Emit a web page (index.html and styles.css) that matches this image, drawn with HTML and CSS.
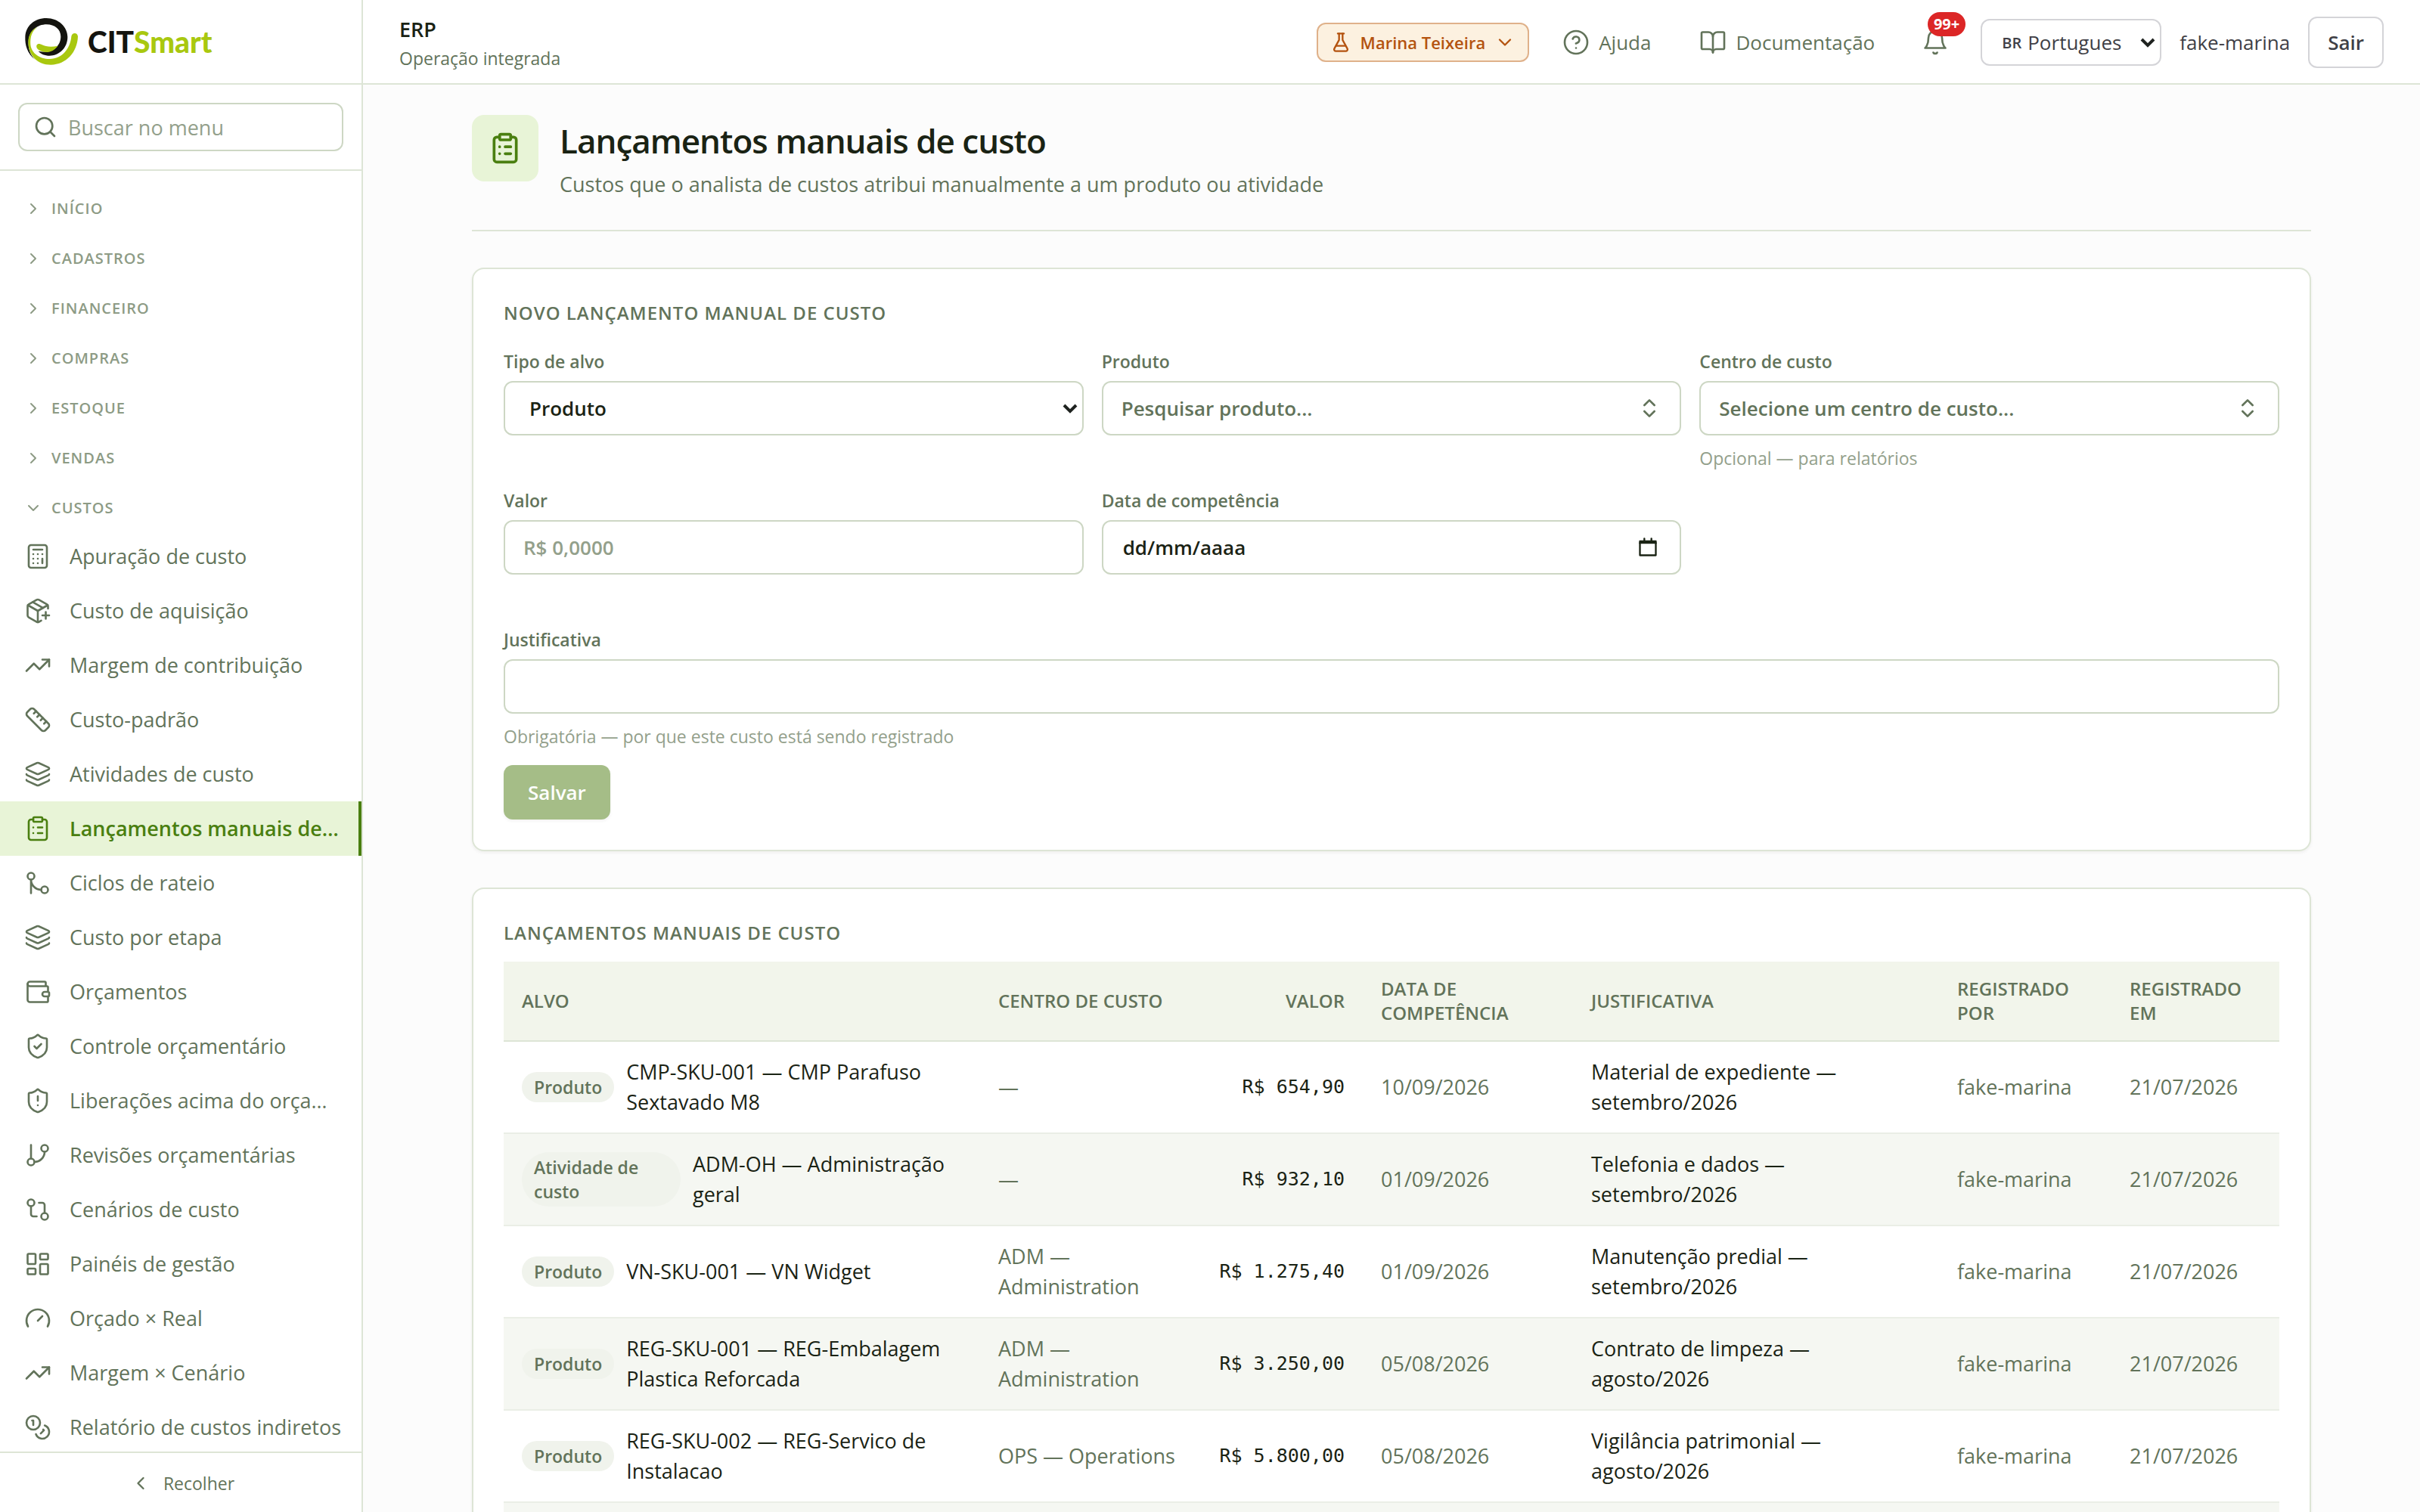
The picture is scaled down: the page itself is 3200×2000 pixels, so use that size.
FILE: index.html
```html
<!DOCTYPE html>
<html lang="pt-BR">
<head>
<meta charset="utf-8">
<meta name="viewport" content="width=device-width, initial-scale=1">
<title>Lançamentos manuais de custo — ERP</title>
<link rel="stylesheet" href="styles.css">
</head>
<body>
<svg class="sprite" aria-hidden="true">
  <symbol id="i-search" viewBox="0 0 24 24"><circle cx="11" cy="11" r="8"/><path d="m21 21-4.3-4.3"/></symbol>
  <symbol id="i-right" viewBox="0 0 24 24"><path d="m9 18 6-6-6-6"/></symbol>
  <symbol id="i-left" viewBox="0 0 24 24"><path d="m15 18-6-6 6-6"/></symbol>
  <symbol id="i-down" viewBox="0 0 24 24"><path d="m6 9 6 6 6-6"/></symbol>
  <symbol id="i-updown" viewBox="0 0 24 24"><path d="m7 15 5 5 5-5"/><path d="m7 9 5-5 5 5"/></symbol>
  <symbol id="i-calculator" viewBox="0 0 24 24"><rect width="16" height="20" x="4" y="2" rx="2"/><path d="M8 6h8M16 14v4M16 10h.01M12 10h.01M8 10h.01M12 14h.01M8 14h.01M12 18h.01M8 18h.01"/></symbol>
  <symbol id="i-package" viewBox="0 0 24 24"><path d="M16 16h6M19 13v6"/><path d="M21 10V8a2 2 0 0 0-1-1.73l-7-4a2 2 0 0 0-2 0l-7 4A2 2 0 0 0 3 8v8a2 2 0 0 0 1 1.73l7 4a2 2 0 0 0 2 0l2-1.14"/><path d="m7.5 4.27 9 5.15"/><path d="M3.29 7 12 12l8.71-5"/><path d="M12 22V12"/></symbol>
  <symbol id="i-trend" viewBox="0 0 24 24"><path d="M22 7 13.5 15.5 8.5 10.5 2 17"/><path d="M16 7h6v6"/></symbol>
  <symbol id="i-ruler" viewBox="0 0 24 24"><path d="M21.3 15.3a2.4 2.4 0 0 1 0 3.4l-2.6 2.6a2.4 2.4 0 0 1-3.4 0L2.7 8.7a2.41 2.41 0 0 1 0-3.4l2.6-2.6a2.41 2.41 0 0 1 3.4 0Z"/><path d="m14.5 12.5 2-2M11.5 9.5l2-2M8.500 6.500l2-2M17.500 15.500l2-2"/></symbol>
  <symbol id="i-layers" viewBox="0 0 24 24"><path d="M12.830 2.180a2 2 0 0 0-1.660 0L2.600 6.080a1 1 0 0 0 0 1.830l8.580 3.910a2 2 0 0 0 1.660 0l8.580-3.900a1 1 0 0 0 0-1.830z"/><path d="M2 12a1 1 0 0 0 .58.910l8.600 3.910a2 2 0 0 0 1.650 0l8.580-3.900A1 1 0 0 0 22 12"/><path d="M2 17a1 1 0 0 0 .58.910l8.600 3.910a2 2 0 0 0 1.650 0l8.580-3.900A1 1 0 0 0 22 17"/></symbol>
  <symbol id="i-clipboard" viewBox="0 0 24 24"><rect width="8" height="4" x="8" y="2" rx="1"/><path d="M16 4h2a2 2 0 0 1 2 2v14a2 2 0 0 1-2 2H6a2 2 0 0 1-2-2V6a2 2 0 0 1 2-2h2"/><path d="M12 11h4M12 16h4M8 11h.01M8 16h.01"/></symbol>
  <symbol id="i-merge" viewBox="0 0 24 24"><circle cx="18" cy="18" r="3"/><circle cx="6" cy="6" r="3"/><path d="M6 21V9a9 9 0 0 0 9 9"/></symbol>
  <symbol id="i-wallet" viewBox="0 0 24 24"><path d="M19 7V4a1 1 0 0 0-1-1H5a2 2 0 0 0 0 4h15a1 1 0 0 1 1 1v4h-3a2 2 0 0 0 0 4h3a1 1 0 0 0 1-1v-2a1 1 0 0 0-1-1"/><path d="M3 5v14a2 2 0 0 0 2 2h15a1 1 0 0 0 1-1v-4"/></symbol>
  <symbol id="i-shield-check" viewBox="0 0 24 24"><path d="M20 13c0 5-3.500 7.500-7.660 8.950a1 1 0 0 1-.67-.01C7.500 20.500 4 18 4 13V6a1 1 0 0 1 1-1c2 0 4.500-1.200 6.240-2.720a1.170 1.170 0 0 1 1.520 0C14.510 3.810 17 5 19 5a1 1 0 0 1 1 1z"/><path d="m9 12 2 2 4-4"/></symbol>
  <symbol id="i-shield-alert" viewBox="0 0 24 24"><path d="M20 13c0 5-3.500 7.500-7.660 8.950a1 1 0 0 1-.67-.01C7.500 20.500 4 18 4 13V6a1 1 0 0 1 1-1c2 0 4.500-1.200 6.240-2.720a1.170 1.170 0 0 1 1.520 0C14.510 3.810 17 5 19 5a1 1 0 0 1 1 1z"/><path d="M12 8v4M12 16h.01"/></symbol>
  <symbol id="i-branch" viewBox="0 0 24 24"><path d="M6 3v12"/><circle cx="18" cy="6" r="3"/><circle cx="6" cy="18" r="3"/><path d="M18 9a9 9 0 0 1-9 9"/></symbol>
  <symbol id="i-compare" viewBox="0 0 24 24"><circle cx="18" cy="18" r="3"/><circle cx="6" cy="6" r="3"/><path d="M13 6h3a2 2 0 0 1 2 2v7"/><path d="M11 18H8a2 2 0 0 1-2-2V9"/></symbol>
  <symbol id="i-dashboard" viewBox="0 0 24 24"><rect width="7" height="9" x="3" y="3" rx="1"/><rect width="7" height="5" x="14" y="3" rx="1"/><rect width="7" height="9" x="14" y="12" rx="1"/><rect width="7" height="5" x="3" y="16" rx="1"/></symbol>
  <symbol id="i-gauge" viewBox="0 0 24 24"><path d="m12 14 4-4"/><path d="M3.340 19a10 10 0 1 1 17.320 0"/></symbol>
  <symbol id="i-coins" viewBox="0 0 24 24"><circle cx="8" cy="8" r="6"/><path d="M18.090 10.370A6 6 0 1 1 10.340 18"/><path d="M7 6h1v4"/><path d="m16.710 13.880.7.710-2.820 2.820"/></symbol>
  <symbol id="i-flask" viewBox="0 0 24 24"><path d="M10 2v7.310L4.700 19a2 2 0 0 0 1.800 3h11a2 2 0 0 0 1.800-3L14 9.300V2"/><path d="M8.500 2h7M7 16h10"/></symbol>
  <symbol id="i-help" viewBox="0 0 24 24"><circle cx="12" cy="12" r="10"/><path d="M9.090 9a3 3 0 0 1 5.830 1c0 2-3 3-3 3M12 17h.01"/></symbol>
  <symbol id="i-book" viewBox="0 0 24 24"><path d="M12 7v14"/><path d="M3 18a1 1 0 0 1-1-1V4a1 1 0 0 1 1-1h5a4 4 0 0 1 4 4 4 4 0 0 1 4-4h5a1 1 0 0 1 1 1v13a1 1 0 0 1-1 1h-6a3 3 0 0 0-3 3 3 3 0 0 0-3-3z"/></symbol>
  <symbol id="i-bell" viewBox="0 0 24 24"><path d="M6 8a6 6 0 0 1 12 0c0 7 3 9 3 9H3s3-2 3-9"/><path d="M10.300 21a1.940 1.940 0 0 0 3.400 0"/></symbol>
  <symbol id="i-calendar" viewBox="0 0 24 24"><path d="M3 5h18v16H3zM8 2v3M16 2v3"/><path d="M3 7h18"/></symbol>
</svg>

<div class="app">
  <aside class="sidebar">
    <a class="brand" href="#" aria-label="CITSmart">
      <svg class="brand-mark" viewBox="40 42 214 192" aria-hidden="true">
        <path fill="#14140f" d="M83 210C50 185 42 150 43 120 45 75 80 45 127 45c48 0 84 35 84 75 0 45-36 74-71 74-20 0-35-7-45-18 30 5 50 3 66-10 16-13 23-30 23-48 0-28-24-48-56-48-38 0-70 25-72 70-1 25 6 50 27 70Z"/>
        <path fill="#a9c80f" d="M92 80C68 96 62 122 64 150c4 35 36 57 76 57 50 0 82-42 86-89 2-17 25-17 26 0-2 62-47 112-107 112-55 0-90-40-90-90 0-28 13-50 37-60Z"/>
        <path fill="#a9c80f" d="M88 153c4-9 14-7 22-2 15 8 40 9 62 4-12 16-27 25-44 25-20 0-44-11-40-27Z"/>
      </svg>
      <span class="brand-name">CIT<span class="brand-accent">Smart</span></span>
    </a>
    <div class="search-area">
      <label class="search">
        <svg class="icon icon-md"><use href="#i-search"/></svg>
        <input type="text" placeholder="Buscar no menu" aria-label="Buscar no menu">
      </label>
    </div>
    <nav class="nav" aria-label="Menu principal">
      <button class="group" type="button"><svg class="icon icon-xs"><use href="#i-right"/></svg>Início</button>
      <button class="group" type="button"><svg class="icon icon-xs"><use href="#i-right"/></svg>Cadastros</button>
      <button class="group" type="button"><svg class="icon icon-xs"><use href="#i-right"/></svg>Financeiro</button>
      <button class="group" type="button"><svg class="icon icon-xs"><use href="#i-right"/></svg>Compras</button>
      <button class="group" type="button"><svg class="icon icon-xs"><use href="#i-right"/></svg>Estoque</button>
      <button class="group" type="button"><svg class="icon icon-xs"><use href="#i-right"/></svg>Vendas</button>
      <button class="group" type="button" aria-expanded="true"><svg class="icon icon-xs"><use href="#i-down"/></svg>Custos</button>
      <a class="item" href="#"><svg class="icon"><use href="#i-calculator"/></svg><span>Apuração de custo</span></a>
      <a class="item" href="#"><svg class="icon"><use href="#i-package"/></svg><span>Custo de aquisição</span></a>
      <a class="item" href="#"><svg class="icon"><use href="#i-trend"/></svg><span>Margem de contribuição</span></a>
      <a class="item" href="#"><svg class="icon"><use href="#i-ruler"/></svg><span>Custo-padrão</span></a>
      <a class="item" href="#"><svg class="icon"><use href="#i-layers"/></svg><span>Atividades de custo</span></a>
      <a class="item active" href="#" aria-current="page"><svg class="icon"><use href="#i-clipboard"/></svg><span>Lançamentos manuais de custo</span></a>
      <a class="item" href="#"><svg class="icon"><use href="#i-merge"/></svg><span>Ciclos de rateio</span></a>
      <a class="item" href="#"><svg class="icon"><use href="#i-layers"/></svg><span>Custo por etapa</span></a>
      <a class="item" href="#"><svg class="icon"><use href="#i-wallet"/></svg><span>Orçamentos</span></a>
      <a class="item" href="#"><svg class="icon"><use href="#i-shield-check"/></svg><span>Controle orçamentário</span></a>
      <a class="item" href="#"><svg class="icon"><use href="#i-shield-alert"/></svg><span>Liberações acima do orçamento</span></a>
      <a class="item" href="#"><svg class="icon"><use href="#i-branch"/></svg><span>Revisões orçamentárias</span></a>
      <a class="item" href="#"><svg class="icon"><use href="#i-compare"/></svg><span>Cenários de custo</span></a>
      <a class="item" href="#"><svg class="icon"><use href="#i-dashboard"/></svg><span>Painéis de gestão</span></a>
      <a class="item" href="#"><svg class="icon"><use href="#i-gauge"/></svg><span>Orçado × Real</span></a>
      <a class="item" href="#"><svg class="icon"><use href="#i-trend"/></svg><span>Margem × Cenário</span></a>
      <a class="item" href="#"><svg class="icon"><use href="#i-coins"/></svg><span>Relatório de custos indiretos</span></a>
    </nav>
    <button class="collapse" type="button"><svg class="icon icon-sm"><use href="#i-left"/></svg>Recolher</button>
  </aside>

  <div class="workspace">
    <header class="topbar">
      <div class="app-title">
        <strong>ERP</strong>
        <span>Operação integrada</span>
      </div>
      <div class="tools">
        <button class="persona" type="button"><svg class="icon icon-sm"><use href="#i-flask"/></svg>Marina Teixeira<svg class="icon icon-sm"><use href="#i-down"/></svg></button>
        <a class="tool-link" href="#"><svg class="icon"><use href="#i-help"/></svg>Ajuda</a>
        <a class="tool-link" href="#"><svg class="icon"><use href="#i-book"/></svg>Documentação</a>
        <button class="bell" type="button" aria-label="Notificações"><svg class="icon"><use href="#i-bell"/></svg><span class="count">99+</span></button>
        <label class="language"><span>BR</span>
          <select aria-label="Idioma"><option>Portugues</option></select>
        </label>
        <span class="user">fake-marina</span>
        <button class="logout" type="button">Sair</button>
      </div>
    </header>

    <main class="main">
      <div class="content">
        <div class="page-head">
          <div class="page-icon"><svg class="icon icon-lg"><use href="#i-clipboard"/></svg></div>
          <div>
            <h1>Lançamentos manuais de custo</h1>
            <p>Custos que o analista de custos atribui manualmente a um produto ou atividade</p>
          </div>
        </div>

        <section class="card">
          <h2>Novo lançamento manual de custo</h2>
          <form class="form">
            <div class="field">
              <label for="tipo">Tipo de alvo</label>
              <select class="control dropdown" id="tipo"><option>Produto</option></select>
            </div>
            <div class="field">
              <label for="produto">Produto</label>
              <button class="control combo" id="produto" type="button">Pesquisar produto...<svg class="icon icon-md"><use href="#i-updown"/></svg></button>
            </div>
            <div class="field">
              <label for="centro">Centro de custo</label>
              <button class="control combo" id="centro" type="button">Selecione um centro de custo...<svg class="icon icon-md"><use href="#i-updown"/></svg></button>
              <p class="hint">Opcional — para relatórios</p>
            </div>
            <div class="field">
              <label for="valor">Valor</label>
              <input class="control" id="valor" type="text" placeholder="R$ 0,0000">
            </div>
            <div class="field">
              <label for="data">Data de competência</label>
              <div class="control date">
                <input id="data" type="text" placeholder="dd/mm/aaaa">
                <button type="button" aria-label="Abrir calendário"><svg class="icon icon-sm"><use href="#i-calendar"/></svg></button>
              </div>
            </div>
            <div class="field wide">
              <label for="justificativa">Justificativa</label>
              <input class="control" id="justificativa" type="text">
              <p class="hint">Obrigatória — por que este custo está sendo registrado</p>
            </div>
            <button class="save" type="submit" disabled>Salvar</button>
          </form>
        </section>

        <section class="card">
          <h2>Lançamentos manuais de custo</h2>
          <table class="entries">
            <colgroup>
              <col class="c-target"><col class="c-center"><col class="c-value"><col class="c-date"><col class="c-reason"><col class="c-by"><col class="c-on">
            </colgroup>
            <thead>
              <tr><th>Alvo</th><th>Centro de custo</th><th class="num">Valor</th><th>Data de competência</th><th>Justificativa</th><th>Registrado por</th><th>Registrado em</th></tr>
            </thead>
            <tbody>
              <tr>
                <td><div class="target"><span class="tag">Produto</span><span>CMP-SKU-001 — CMP Parafuso Sextavado M8</span></div></td>
                <td class="muted">—</td><td class="num">R$&nbsp;654,90</td><td class="muted">10/09/2026</td>
                <td>Material de expediente — setembro/2026</td><td class="muted">fake-marina</td><td class="muted">21/07/2026</td>
              </tr>
              <tr>
                <td><div class="target"><span class="tag">Atividade de custo</span><span>ADM-OH — Administração geral</span></div></td>
                <td class="muted">—</td><td class="num">R$&nbsp;932,10</td><td class="muted">01/09/2026</td>
                <td>Telefonia e dados — setembro/2026</td><td class="muted">fake-marina</td><td class="muted">21/07/2026</td>
              </tr>
              <tr>
                <td><div class="target"><span class="tag">Produto</span><span>VN-SKU-001 — VN Widget</span></div></td>
                <td class="muted">ADM — Administration</td><td class="num">R$&nbsp;1.275,40</td><td class="muted">01/09/2026</td>
                <td>Manutenção predial — setembro/2026</td><td class="muted">fake-marina</td><td class="muted">21/07/2026</td>
              </tr>
              <tr>
                <td><div class="target"><span class="tag">Produto</span><span>REG-SKU-001 — REG-Embalagem Plastica Reforcada</span></div></td>
                <td class="muted">ADM — Administration</td><td class="num">R$&nbsp;3.250,00</td><td class="muted">05/08/2026</td>
                <td>Contrato de limpeza — agosto/2026</td><td class="muted">fake-marina</td><td class="muted">21/07/2026</td>
              </tr>
              <tr>
                <td><div class="target"><span class="tag">Produto</span><span>REG-SKU-002 — REG-Servico de Instalacao</span></div></td>
                <td class="muted">OPS — Operations</td><td class="num">R$&nbsp;5.800,00</td><td class="muted">05/08/2026</td>
                <td>Vigilância patrimonial — agosto/2026</td><td class="muted">fake-marina</td><td class="muted">21/07/2026</td>
              </tr>
              <tr><td></td><td></td><td></td><td></td><td></td><td></td><td></td></tr>
            </tbody>
          </table>
        </section>
      </div>
    </main>
  </div>
</div>
</body>
</html>
```
FILE: styles.css
```css
:root {
  --ink: #1a2314;
  --muted: #62735a;
  --faint: #93a08b;
  --line: #dde5d6;
  --field-line: #cdd7c4;
  --green: #4a7f10;
  --green-soft: #e8f4d7;
  --zinc: #3f3f46;
  --zinc-line: #d4d4d8;
}

* { box-sizing: border-box; }

body {
  margin: 0;
  background: #fcfcfc;
  color: var(--ink);
  font-family: "Open Sans", "Noto Sans", sans-serif;
  font-size: 27px;
  line-height: 40px;
}

button, input, select {
  margin: 0;
  padding: 0;
  border: 0;
  background: none;
  color: inherit;
  font: inherit;
}

h1, h2, p { margin: 0; }
a { color: inherit; text-decoration: none; }
.sprite { display: none; }

.icon {
  width: 36px;
  height: 36px;
  flex: none;
  fill: none;
  stroke: currentColor;
  stroke-width: 1.75;
  stroke-linecap: round;
  stroke-linejoin: round;
}
.icon-xs { width: 24px; height: 24px; stroke-width: 2; }
.icon-sm { width: 28px; height: 28px; stroke-width: 2; }
.icon-md { width: 32px; height: 32px; stroke-width: 2; }
.icon-lg { width: 44px; height: 44px; stroke-width: 2; }

.app { display: flex; height: 100vh; overflow: hidden; }

/* Sidebar */
.sidebar {
  display: flex;
  flex: none;
  flex-direction: column;
  width: 480px;
  border-right: 2px solid var(--line);
  background: #fff;
  color: var(--muted);
}
.brand {
  display: flex;
  flex: none;
  align-items: center;
  gap: 12px;
  height: 112px;
  padding: 0 32px;
  border-bottom: 2px solid var(--line);
}
.brand-mark { width: 72px; height: 64px; }
.brand-name {
  color: #14140f;
  font-family: Lato, sans-serif;
  font-size: 39px;
  font-weight: 900;
}
.brand-accent { color: #a9c80f; }

.search-area { padding: 24px; border-bottom: 2px solid var(--line); }
.search {
  display: flex;
  align-items: center;
  gap: 14px;
  height: 64px;
  padding: 0 18px;
  border: 2px solid var(--field-line);
  border-radius: 12px;
}
.search input { flex: 1; min-width: 0; padding-top: 2px; outline: 0; }
input::placeholder { color: var(--faint); opacity: 1; }

.nav {
  flex: 1;
  min-height: 0;
  padding-top: 12px;
  overflow-y: auto;
  scrollbar-width: none;
}
.group {
  display: flex;
  align-items: center;
  gap: 12px;
  width: 100%;
  height: 56px;
  margin-top: 10px;
  padding: 0 32px;
  color: #8d9b85;
  font-size: 20px;
  font-weight: 600;
  letter-spacing: 1px;
  text-transform: uppercase;
}
.item {
  display: flex;
  align-items: center;
  gap: 24px;
  height: 72px;
  padding: 0 24px 0 32px;
}
.item span {
  overflow: hidden;
  text-overflow: ellipsis;
  white-space: nowrap;
}
.item.active {
  border-right: 4px solid var(--green);
  background: var(--green-soft);
  color: var(--green);
  font-weight: 600;
}
.collapse {
  display: flex;
  flex: none;
  align-items: center;
  justify-content: center;
  gap: 16px;
  height: 80px;
  padding: 2px 0 0 4px;
  border-top: 2px solid var(--line);
  font-size: 23px;
}

/* Top bar */
.workspace { display: flex; flex: 1; flex-direction: column; min-width: 0; }
.topbar {
  display: flex;
  flex: none;
  align-items: center;
  justify-content: space-between;
  height: 112px;
  padding: 2px 48px 0;
  border-bottom: 2px solid var(--line);
  background: #fff;
}
.app-title { display: flex; flex-direction: column; padding-top: 2px; }
.app-title strong { font-weight: 600; }
.app-title span { color: var(--muted); font-size: 23px; line-height: 36px; }
.tools {
  display: flex;
  align-items: center;
  gap: 24px;
  color: var(--zinc);
  font-size: 26px;
}
.persona {
  display: flex;
  align-items: center;
  gap: 12px;
  height: 52px;
  padding: 0 16px;
  border: 2px solid #dfb18a;
  border-radius: 12px;
  background: #fcf1e0;
  color: #b4530f;
  font-size: 22px;
  font-weight: 600;
}
.tool-link {
  display: flex;
  align-items: center;
  gap: 12px;
  padding: 0 20px;
  color: var(--muted);
}
.bell {
  position: relative;
  display: grid;
  place-items: center;
  width: 72px;
  height: 72px;
  color: var(--muted);
}
.count {
  position: absolute;
  top: -4px;
  right: -4px;
  height: 32px;
  padding: 0 8px;
  border-radius: 16px;
  background: #dc2626;
  color: #fff;
  font-size: 20px;
  font-weight: 700;
  line-height: 32px;
}
.language {
  display: flex;
  align-items: center;
  gap: 8px;
  height: 62px;
  padding: 0 6px 0 26px;
  border: 2px solid var(--zinc-line);
  border-radius: 12px;
  background: #fff;
}
.language span { padding-top: 2px; font-size: 20px; font-weight: 600; }
.language select, .dropdown {
  appearance: none;
  background-repeat: no-repeat;
  background-image: url("data:image/svg+xml,%3Csvg xmlns='http://www.w3.org/2000/svg' viewBox='0 0 20 14'%3E%3Cpath d='M2 3l8 8 8-8' fill='none' stroke='%231f2320' stroke-width='4'/%3E%3C/svg%3E");
  background-size: 20px 14px;
}
.language select { padding-right: 44px; background-position: right center; }
.logout {
  height: 68px;
  padding: 0 24px;
  border: 2px solid var(--zinc-line);
  border-radius: 12px;
  background: #fff;
  font-weight: 600;
}

/* Page */
.main { flex: 1; min-height: 0; overflow-y: auto; scrollbar-width: none; }
.content {
  display: flex;
  flex-direction: column;
  gap: 48px;
  max-width: 2528px;
  margin: 0 auto;
  padding: 40px 48px 48px;
}
.page-head {
  display: flex;
  gap: 28px;
  padding-bottom: 40px;
  border-bottom: 2px solid var(--line);
}
.page-icon {
  display: grid;
  flex: none;
  place-items: center;
  width: 88px;
  height: 88px;
  border-radius: 16px;
  background: var(--green-soft);
  color: var(--green);
}
h1 { font-size: 44px; font-weight: 600; line-height: 68px; letter-spacing: -1px; }
.page-head p { margin-top: 4px; color: var(--muted); }

.card {
  padding: 40px;
  border: 2px solid var(--line);
  border-radius: 16px;
  background: #fff;
  box-shadow: 0 2px 4px rgba(26, 35, 20, 0.06);
}
h2 {
  color: var(--muted);
  font-size: 24px;
  font-weight: 600;
  line-height: 36px;
  letter-spacing: 1px;
  text-transform: uppercase;
}

/* Form */
.form {
  display: grid;
  grid-template-columns: repeat(3, 1fr);
  gap: 20px 24px;
  margin-top: 28px;
}
.field { display: flex; flex-direction: column; gap: 8px; min-height: 164px; }
.field label { color: var(--muted); font-size: 23px; font-weight: 600; line-height: 36px; }
.wide { grid-column: 1 / -1; }
.control {
  width: 100%;
  height: 72px;
  padding: 0 24px;
  border: 2px solid var(--field-line);
  border-radius: 12px;
  background-color: #fff;
  font-size: 26px;
  font-weight: 600;
}
.dropdown { padding-left: 32px; background-position: right 6px center; }
.combo {
  display: flex;
  align-items: center;
  justify-content: space-between;
  color: var(--muted);
}
.date { display: flex; align-items: center; padding-left: 26px; }
.date input { flex: 1; min-width: 0; outline: 0; }
.date input::placeholder { color: var(--ink); }
.date button { display: grid; padding: 0 4px; }
.hint { margin-top: 4px; color: var(--faint); font-size: 23px; line-height: 36px; }
.save {
  justify-self: start;
  height: 72px;
  padding: 0 32px;
  border-radius: 12px;
  background: #a5bd87;
  box-shadow: 0 2px 4px rgba(26, 35, 20, 0.06);
  color: #fff;
  font-size: 26px;
  font-weight: 600;
}

/* Entries table */
.entries {
  width: 100%;
  margin-top: 20px;
  border-spacing: 0;
  table-layout: fixed;
}
.c-target { width: 630px; }
.c-center { width: 288px; }
.c-value { width: 218px; }
.c-date { width: 278px; }
.c-reason { width: 484px; }
.c-by { width: 228px; }
.c-on { width: 222px; }
.entries th {
  padding: 20px 24px;
  border-bottom: 2px solid var(--line);
  background: #f2f5eb;
  color: var(--muted);
  font-size: 24px;
  font-weight: 600;
  line-height: 32px;
  text-align: left;
  text-transform: uppercase;
}
.entries td {
  height: 122px;
  padding: 20px 24px;
  border-bottom: 2px solid #eaeee6;
}
.entries tbody tr:nth-child(even) { background: #f5f7f2; }
.entries .muted { color: var(--muted); }
.entries .num { text-align: right; white-space: nowrap; }
.entries td.num { font-family: "DejaVu Sans Mono", "Liberation Mono", monospace; font-size: 25px; }
.target { display: flex; align-items: center; gap: 16px; }
.tag {
  flex: none;
  max-width: 210px;
  padding: 4px 16px;
  border-radius: 36px;
  background: #f0f3ec;
  color: var(--muted);
  font-size: 23px;
  font-weight: 600;
  line-height: 32px;
}
```
